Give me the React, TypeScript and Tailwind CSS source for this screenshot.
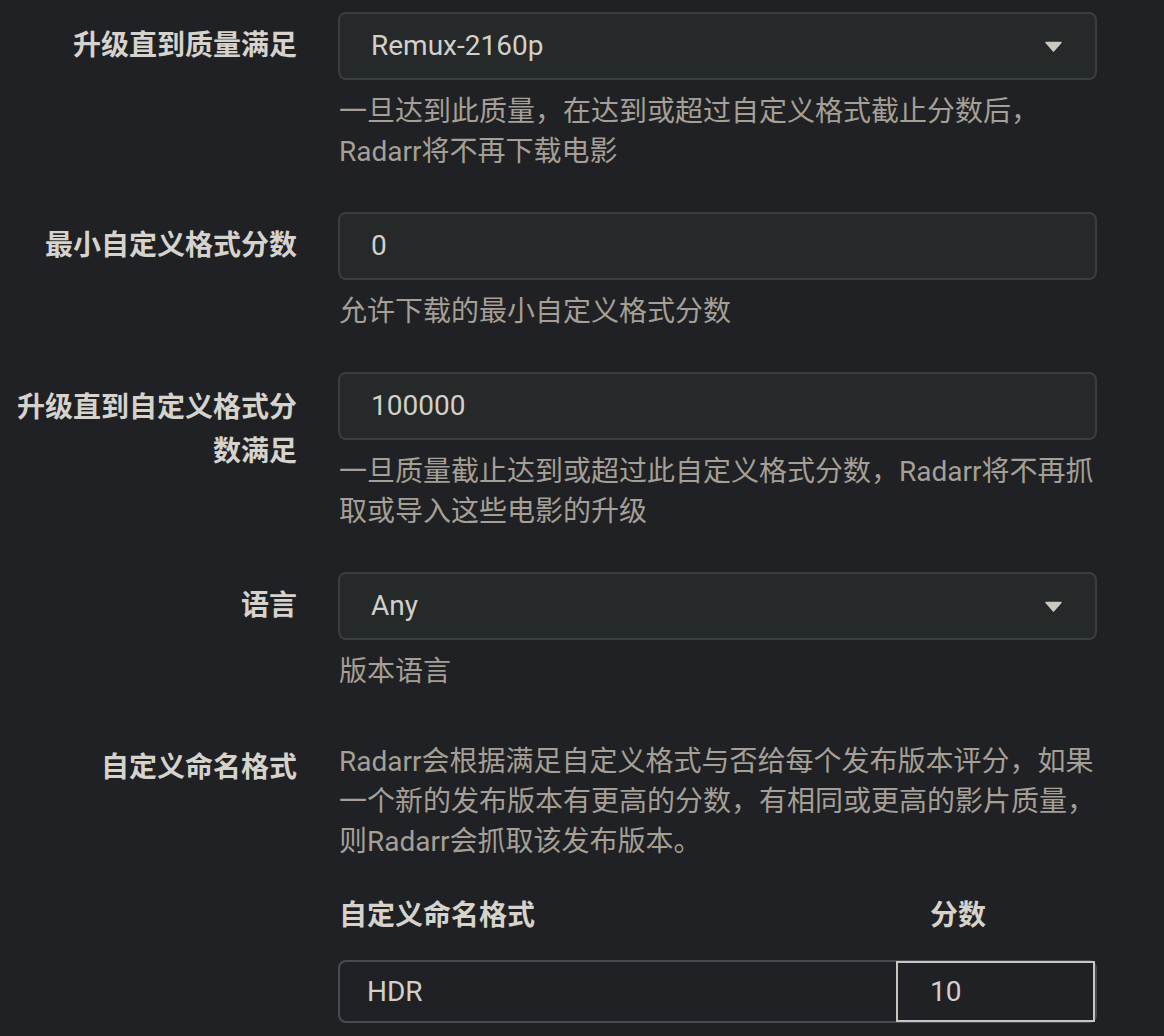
import React from "react";

const font = { fontFamily: "Roboto, 'Noto Sans CJK SC', sans-serif" };

function Caret() {
  return (
    <svg width="17" height="11" viewBox="0 0 17 11" className="shrink-0">
      <path d="M1 1.5 L16 1.5 L8.5 10 Z" fill="#cbc7c1" stroke="#cbc7c1" strokeWidth="1.5" strokeLinejoin="round" />
    </svg>
  );
}

function Field({ value, select }: { value: string; select?: boolean }) {
  return (
    <div className="flex h-[68px] w-[759px] items-center justify-between rounded-[8px] border-2 border-[#393e40] bg-[#25292a] pl-[31px] pr-[33px] text-[28px] text-[#d3cfc9]">
      <span>{value}</span>
      {select && <Caret />}
    </div>
  );
}

function Help({ lines, className = "" }: { lines: string[]; className?: string }) {
  return (
    <div className={`text-[28px] leading-[40px] text-[#a59f96] ${className}`}>
      {lines.map((l) => (
        <div key={l} className="whitespace-nowrap">{l}</div>
      ))}
    </div>
  );
}

function Row({ label, children, labelPad = "pt-[12px]" }: { label: string[]; children: React.ReactNode; labelPad?: string }) {
  return (
    <div className="flex">
      <div className={`w-[297px] shrink-0 text-right text-[28px] font-bold leading-[44px] text-[#d6d2cc] ${labelPad}`}>
        {label.map((l) => (
          <div key={l} className="whitespace-nowrap">{l}</div>
        ))}
      </div>
      <div className="ml-[41px] flex flex-col">{children}</div>
    </div>
  );
}

export default function App() {
  return (
    <div className="min-h-screen bg-[#202124] pt-[12px]" style={font}>
      <div className="flex flex-col gap-[40px]">
        <Row label={["升级直到质量满足"]}>
          <Field value="Remux-2160p" select />
          <Help className="mt-[12px] pl-[1px]" lines={["一旦达到此质量，在达到或超过自定义格式截止分数后，", "Radarr将不再下载电影"]} />
        </Row>
        <Row label={["最小自定义格式分数"]}>
          <Field value="0" />
          <Help className="mt-[12px] pl-[1px]" lines={["允许下载的最小自定义格式分数"]} />
        </Row>
        <Row label={["升级直到自定义格式分", "数满足"]} labelPad="pt-[14px]">
          <Field value="100000" />
          <Help className="mt-[12px] pl-[1px]" lines={["一旦质量截止达到或超过此自定义格式分数，Radarr将不再抓", "取或导入这些电影的升级"]} />
        </Row>
        <Row label={["语言"]}>
          <Field value="Any" select />
          <Help className="mt-[12px] pl-[1px]" lines={["版本语言"]} />
        </Row>
        <Row label={["自定义命名格式"]} labelPad="pt-[14px]">
          <Help className="pt-[10px] pl-[1px]" lines={["Radarr会根据满足自定义格式与否给每个发布版本评分，如果", "一个新的发布版本有更高的分数，有相同或更高的影片质量，", "则Radarr会抓取该发布版本。"]} />
          <div className="flex w-[759px] pt-[34px] pl-[1px] text-[28px] font-bold leading-[40px] text-[#d6d2cc]">
            <div className="w-[557px]">自定义命名格式</div>
            <div className="pl-[34px]">分数</div>
          </div>
          <div className="mt-[24px] flex h-[63px] w-[759px] rounded-[8px] border-2 border-[#464b4f] text-[28px] text-[#d3cfc9]">
            <div className="flex w-[556px] items-center pl-[27px]">HDR</div>
            <div className="-my-[1px] flex flex-1 items-center border-2 border-[#c9c5bf] pl-[32px]">10</div>
          </div>
        </Row>
      </div>
    </div>
  );
}
